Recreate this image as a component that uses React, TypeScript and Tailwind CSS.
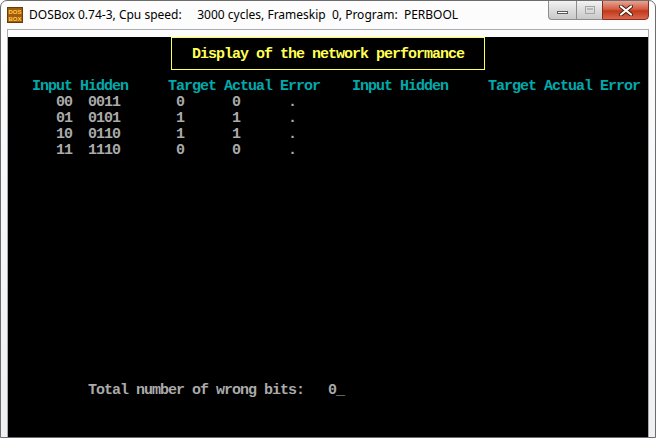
import React from "react";

const dosFont = {
  fontFamily: '"Liberation Mono", "DejaVu Sans Mono", monospace',
};

const header =
  "   Input Hidden     Target Actual Error    Input Hidden     Target Actual Error";

const rows = [
  "      00  0011       0      0      .",
  "      01  0101       1      1      .",
  "      10  0110       1      1      .",
  "      11  1110       0      0      .",
];

function DosIcon() {
  return (
    <svg width="16" height="16" viewBox="0 0 16 16" className="shrink-0">
      <rect x="0" y="0" width="16" height="16" fill="#6b3a0c" />
      <rect x="1" y="1" width="14" height="14" fill="#a35a12" />
      <text x="8" y="7" textAnchor="middle" fontSize="6" fontWeight="700" fill="#ffd23a" fontFamily="Liberation Sans, sans-serif">
        DOS
      </text>
      <text x="8" y="14" textAnchor="middle" fontSize="6" fontWeight="700" fill="#ffd23a" fontFamily="Liberation Sans, sans-serif">
        BOX
      </text>
    </svg>
  );
}

function WindowControls() {
  return (
    <div className="flex self-start -mt-px">
      <div className="flex h-[20px] w-[28px] items-center justify-center rounded-bl-[4px] border border-[#8d8d8d] border-r-0 bg-[linear-gradient(#f3f3f3,#dcdcdc_50%,#c9c9c9)]">
        <div className="mt-[5px] h-[3px] w-[11px] border border-[#5a5a5a] bg-white" />
      </div>
      <div className="flex h-[20px] w-[26px] items-center justify-center border border-[#8d8d8d] border-r-0 bg-[linear-gradient(#f3f3f3,#dcdcdc_50%,#c9c9c9)]">
        <div className="h-[8px] w-[10px] border border-[#a5a5a5] p-[1px]">
          <div className="h-full w-full border-t-2 border-[#b8b8b8]" />
        </div>
      </div>
      <div className="flex h-[20px] w-[47px] items-center justify-center rounded-br-[4px] border border-[#8a2f1f] bg-[linear-gradient(#e8a392,#d45d43_45%,#c2391c_55%,#d9694d)]">
        <svg width="14" height="11" viewBox="0 0 14 11">
          <path d="M2 1.5 L12 9.5 M12 1.5 L2 9.5" stroke="#4a1d12" strokeWidth="4" strokeLinecap="round" />
          <path d="M2 1.5 L12 9.5 M12 1.5 L2 9.5" stroke="#ffffff" strokeWidth="2.2" strokeLinecap="round" />
        </svg>
      </div>
    </div>
  );
}

export default function App() {
  return (
    <div className="flex h-[438px] w-[656px] flex-col overflow-hidden rounded-t-[7px] border border-[#6d6d6d] bg-[linear-gradient(#fdfdfd,#eef0f3)]">
      <div className="flex h-[28px] shrink-0 items-start pl-[6px] pr-[6px]">
        <div className="flex h-full flex-1 items-center gap-[6px] pb-[1px]">
          <DosIcon />
          <span
            className="whitespace-pre text-[12px] text-black"
            style={{ fontFamily: '"Noto Sans", "Open Sans", sans-serif' }}
          >
            {"DOSBox 0.74-3, Cpu speed:     3000 cycles, Frameskip  0, Program:  PERBOOL"}
          </span>
        </div>
        <WindowControls />
      </div>
      <div className="flex flex-1 px-[6px] pb-[6px]">
        <div className="border border-[#a9abae]">
          <div
            className="h-[400px] w-[640px] bg-black text-[15px] font-bold leading-[16px] tracking-[-1px]"
            style={dosFont}
          >
            <div className="ml-[163px] mt-[7px] mb-[8px] h-[33px] w-[314px] border border-[#ffff55] pl-[20px] pt-[8px]">
              <div className="translate-y-px whitespace-pre text-[#ffff55]">Display of the network performance</div>
            </div>
            <div className="translate-y-px whitespace-pre text-[#00aaaa]">{header}</div>
            {rows.map((r) => (
              <div key={r} className="translate-y-px whitespace-pre text-[#aaaaaa]">
                {r}
              </div>
            ))}
            <div className="mt-[224px] translate-y-px whitespace-pre text-[#aaaaaa]">
              {"          Total number of wrong bits:   0_"}
            </div>
          </div>
        </div>
      </div>
    </div>
  );
}
